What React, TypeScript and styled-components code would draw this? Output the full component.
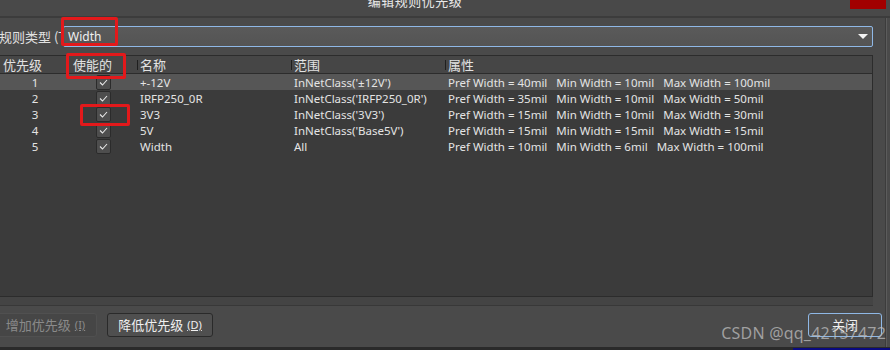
import styled, { createGlobalStyle } from 'styled-components';

const GlobalStyle = createGlobalStyle`
  html, body {
    margin: 0;
    padding: 0;
    background: #4a4a4a;
  }
  body {
    font-family: "Noto Sans", "Noto Sans CJK SC", sans-serif;
    font-size: 12px;
    color: #e2e2e2;
  }
`;

const Window = styled.div`
  position: relative;
  width: 890px;
  height: 350px;
  overflow: hidden;
  background: #4a4a4a;
  display: flex;
  flex-direction: column;
`;

const TitleBar = styled.div`
  height: 16px;
  flex: none;
  display: flex;
  justify-content: center;
  background: #494949;
  border-bottom: 2px solid #3c3c3c;
  position: relative;
  padding-right: 60px;
`;

const Title = styled.div`
  font-family: "Noto Sans CJK SC", sans-serif;
  font-size: 13px;
  line-height: 13px;
  margin-top: -6px;
  color: #e8e8e8;
  letter-spacing: 0.5px;
`;

const CloseButton = styled.div`
  position: absolute;
  right: 4px;
  top: 0;
  width: 36px;
  height: 9px;
  background: #a10000;
`;

const Body = styled.div`
  flex: 1;
  display: flex;
  flex-direction: column;
  padding: 8px 13px 0 0;
  border-right: 1px solid #5c5c5c;
  margin-right: 3px;
  box-shadow: inset -1px 0 0 #3c3c3c;
`;

const RuleRow = styled.div`
  display: flex;
  align-items: center;
  height: 21px;
`;

const RuleLabel = styled.div`
  width: 64px;
  flex: none;
  font-family: "Noto Sans CJK SC", sans-serif;
  font-size: 13px;
  white-space: nowrap;
  overflow: hidden;
  margin-left: -1px;
`;

const Combo = styled.div`
  flex: 1;
  height: 19px;
  border: 1px solid #8fb8e6;
  border-radius: 2px;
  background: linear-gradient(#5a5a5a, #545454);
  display: flex;
  align-items: center;
  justify-content: space-between;
  padding: 0 4px 0 4px;
  font-size: 12px;
  color: #f0f0f0;
`;

const Caret = styled.div`
  width: 0;
  height: 0;
  border-left: 5px solid transparent;
  border-right: 5px solid transparent;
  border-top: 5px solid #f4f4f4;
`;

const Table = styled.div`
  margin-top: 8px;
  height: 240px;
  background: #3b3b3b;
  border: 1px solid #2c2c2c;
  border-left: none;
  display: flex;
  flex-direction: column;
`;

const Grid = styled.div`
  display: grid;
  grid-template-columns: 70px 67px 154px 154px 1fr;
`;

const Header = styled(Grid)`
  height: 17px;
  background: #464646;
  border-bottom: 1px solid #2c2c2c;
  font-family: "Noto Sans CJK SC", sans-serif;
  font-size: 13px;
`;

const HeadCell = styled.div<{ $sep?: boolean }>`
  display: flex;
  align-items: center;
  padding-left: 3px;
  position: relative;
  line-height: 17px;
  &::before {
    content: '';
    display: ${p => (p.$sep ? 'block' : 'none')};
    position: absolute;
    left: 0;
    top: 4px;
    height: 10px;
    width: 1px;
    background: #1f1f1f;
  }
`;

const Row = styled(Grid)<{ $selected?: boolean }>`
  height: 16px;
  align-items: center;
  background: ${p => (p.$selected ? '#565656' : 'transparent')};
  font-size: 11.5px;
  color: #e4e4e4;
  white-space: nowrap;
`;

const PriorityCell = styled.div`
  text-align: center;
`;

const CheckCell = styled.div`
  display: flex;
  justify-content: center;
`;

const CheckBox = styled.div`
  width: 13px;
  height: 13px;
  border: 1px solid #2b2b2b;
  border-radius: 2px;
  background: #4e4e4e;
  display: flex;
  align-items: center;
  justify-content: center;
`;

const TextCell = styled.div`
  padding-left: 3px;
`;

const Attr = styled.span<{ $gap: number }>`
  margin-right: ${p => p.$gap}px;
`;

const Strip = styled.div`
  height: 8px;
  background: #444444;
  border-bottom: 1px solid #383838;
`;

const Footer = styled.div`
  display: flex;
  align-items: center;
  margin-top: 6px;
  height: 25px;
  gap: 10px;
  margin-right: -9px;
  margin-left: -6px;
`;

const Button = styled.div<{ $disabled?: boolean; $focus?: boolean; $w: number }>`
  width: ${p => p.$w}px;
  box-sizing: border-box;
  height: 24px;
  flex: none;
  display: flex;
  align-items: center;
  justify-content: center;
  border: 1px solid ${p => (p.$focus ? '#8fb8e6' : p.$disabled ? '#505050' : '#2a2a2a')};
  border-radius: 3px;
  background: ${p => (p.$disabled ? '#464646' : '#4f4f4f')};
  color: ${p => (p.$disabled ? '#8a8a8a' : '#f0f0f0')};
  font-family: "Noto Sans CJK SC", sans-serif;
  font-size: 13px;
  white-space: nowrap;
`;

const Key = styled.span`
  font-size: 11px;
  margin-left: 4px;
  text-decoration: underline;
  font-family: "Noto Sans", sans-serif;
`;

const Spacer = styled.div`
  flex: 1;
`;

const Mark = styled.div<{ $x: number; $y: number; $w: number; $h: number }>`
  position: absolute;
  left: ${p => p.$x}px;
  top: ${p => p.$y}px;
  width: ${p => p.$w}px;
  height: ${p => p.$h}px;
  border: 3px solid #e3191b;
  border-radius: 2px;
  box-sizing: border-box;
  pointer-events: none;
`;

const Watermark = styled.div`
  position: absolute;
  right: 4px;
  bottom: 6px;
  font-family: "Noto Sans", sans-serif;
  font-size: 16px;
  color: rgba(190, 190, 190, 0.75);
  letter-spacing: 0.2px;
`;

const BottomEdge = styled.div`
  position: absolute;
  left: 0;
  right: 0;
  bottom: 0;
  height: 3px;
  background: #2a2a2a;
  &::after {
    content: '';
    position: absolute;
    left: 793px;
    right: 0;
    top: 1px;
    bottom: 0;
    background: #0a0a80;
  }
`;

const Check = () => (
  <svg width="9" height="7" viewBox="0 0 9 7">
    <path d="M1 3.5 L3.5 6 L8 1" fill="none" stroke="#e8e8e8" strokeWidth="1.1" />
  </svg>
);

const rules = [
  { p: 1, name: '+-12V', scope: "InNetClass('±12V')", pref: 40, min: 10, max: 100 },
  { p: 2, name: 'IRFP250_0R', scope: "InNetClass('IRFP250_0R')", pref: 35, min: 10, max: 50 },
  { p: 3, name: '3V3', scope: "InNetClass('3V3')", pref: 15, min: 10, max: 30 },
  { p: 4, name: '5V', scope: "InNetClass('Base5V')", pref: 15, min: 15, max: 15 },
  { p: 5, name: 'Width', scope: 'All', pref: 10, min: 6, max: 100 },
];

const App = () => {
  return (
    <>
      <GlobalStyle />
      <Window>
        <TitleBar>
          <Title>编辑规则优先级</Title>
          <CloseButton />
        </TitleBar>
        <Body>
          <RuleRow>
            <RuleLabel>规则类型 (T)</RuleLabel>
            <Combo>
              <span>Width</span>
              <Caret />
            </Combo>
          </RuleRow>
          <Table>
            <Header>
              <HeadCell>优先级</HeadCell>
              <HeadCell>使能的</HeadCell>
              <HeadCell $sep>名称</HeadCell>
              <HeadCell $sep>范围</HeadCell>
              <HeadCell $sep>属性</HeadCell>
            </Header>
            {rules.map(r => (
              <Row key={r.p} $selected={r.p === 1}>
                <PriorityCell>{r.p}</PriorityCell>
                <CheckCell>
                  <CheckBox>
                    <Check />
                  </CheckBox>
                </CheckCell>
                <TextCell>{r.name}</TextCell>
                <TextCell>{r.scope}</TextCell>
                <TextCell>
                  <Attr $gap={9}>Pref Width = {r.pref}mil</Attr>
                  <Attr $gap={9}>Min Width = {r.min}mil</Attr>
                  <Attr $gap={0}>Max Width = {r.max}mil</Attr>
                </TextCell>
              </Row>
            ))}
          </Table>
          <Strip />
          <Footer>
            <Button $disabled $w={103}>
              增加优先级<Key>(I)</Key>
            </Button>
            <Button $w={106}>
              降低优先级<Key>(D)</Key>
            </Button>
            <Spacer />
            <Button $focus $w={74}>关闭</Button>
          </Footer>
        </Body>
        <Mark $x={61} $y={17} $w={57} $h={29} />
        <Mark $x={66} $y={53} $w={60} $h={26} />
        <Mark $x={80} $y={104} $w={50} $h={22} />
        <Watermark>CSDN @qq_42157472</Watermark>
        <BottomEdge />
      </Window>
    </>
  );
};

export default App;
